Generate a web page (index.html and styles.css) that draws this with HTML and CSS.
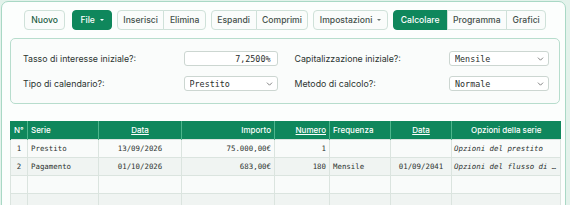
FILE: index.html
```html
<!DOCTYPE html>
<html lang="it">
<head>
<meta charset="utf-8">
<title>Calcolatore prestito</title>
<link rel="stylesheet" href="styles.css">
</head>
<body>
<div class="app">
  <div class="toolbar">
    <button class="btn btn-new">Nuovo</button>
    <button class="btn btn-primary">File <span class="caret"></span></button>
    <div class="group">
      <button class="btn">Inserisci</button>
      <button class="btn">Elimina</button>
    </div>
    <div class="group">
      <button class="btn">Espandi</button>
      <button class="btn">Comprimi</button>
    </div>
    <button class="btn">Impostazioni <span class="caret caret-dark"></span></button>
    <div class="group">
      <button class="btn btn-primary">Calcolare</button>
      <button class="btn">Programma</button>
      <button class="btn">Grafici</button>
    </div>
  </div>

  <div class="settings">
    <div class="field">
      <label class="label">Tasso di interesse iniziale?:</label>
      <input class="control control-sm num" type="text" value="7,2500%">
    </div>
    <div class="field">
      <label class="label">Capitalizzazione iniziale?:</label>
      <div class="select-wrap control-md">
        <select class="control select"><option>Mensile</option></select>
        <svg class="chev" viewBox="0 0 8 5" width="7" height="4"><path d="M0.8 0.8 L4 4 L7.2 0.8" fill="none" stroke="#666" stroke-width="1"/></svg>
      </div>
    </div>
    <div class="field">
      <label class="label">Tipo di calendario?:</label>
      <div class="select-wrap control-sm">
        <select class="control select"><option>Prestito</option></select>
        <svg class="chev" viewBox="0 0 8 5" width="7" height="4"><path d="M0.8 0.8 L4 4 L7.2 0.8" fill="none" stroke="#666" stroke-width="1"/></svg>
      </div>
    </div>
    <div class="field">
      <label class="label">Metodo di calcolo?:</label>
      <div class="select-wrap control-md">
        <select class="control select"><option>Normale</option></select>
        <svg class="chev" viewBox="0 0 8 5" width="7" height="4"><path d="M0.8 0.8 L4 4 L7.2 0.8" fill="none" stroke="#666" stroke-width="1"/></svg>
      </div>
    </div>
  </div>

  <table class="grid">
    <colgroup>
      <col class="c-n"><col class="c-serie"><col class="c-data"><col class="c-imp">
      <col class="c-num"><col class="c-freq"><col class="c-data2"><col class="c-opt">
    </colgroup>
    <thead>
      <tr>
        <th class="l">N°</th>
        <th class="l">Serie</th>
        <th class="c"><u>Data</u></th>
        <th class="r">Importo</th>
        <th class="r"><u>Numero</u></th>
        <th class="l">Frequenza</th>
        <th class="c"><u>Data</u></th>
        <th class="c">Opzioni della serie</th>
      </tr>
    </thead>
    <tbody>
      <tr>
        <td class="c">1</td><td>Prestito</td><td class="c">13/09/2026</td><td class="r">75.000,00€</td>
        <td class="r">1</td><td></td><td></td><td class="opt">Opzioni del prestito</td>
      </tr>
      <tr>
        <td class="c">2</td><td>Pagamento</td><td class="c">01/10/2026</td><td class="r">683,00€</td>
        <td class="r">180</td><td>Mensile</td><td class="c">01/09/2041</td><td class="opt">Opzioni del flusso di …</td>
      </tr>
      <tr><td></td><td></td><td></td><td></td><td></td><td></td><td></td><td></td></tr>
      <tr><td></td><td></td><td></td><td></td><td></td><td></td><td></td><td></td></tr>
      <tr><td></td><td></td><td></td><td></td><td></td><td></td><td></td><td></td></tr>
    </tbody>
  </table>
</div>
</body>
</html>
```

FILE: styles.css
```css
html, body {
  margin: 0;
  padding: 0;
}
body {
  background: #e3f2eb;
  font-family: Inter, "Noto Sans", sans-serif;
  overflow: hidden;
  height: 205px;
}
.app {
  margin: 1px 4px 0 1px;
  border: 1px solid #a9d8c5;
  border-radius: 7px;
  background: #fcfefd;
  padding: 8px 5px 10px 8px;
  height: 240px;
}

/* toolbar */
.toolbar {
  display: flex;
  justify-content: center;
  gap: 5px;
  height: 20px;
  margin-bottom: 8px;
}
.group {
  display: flex;
}
.btn {
  font-family: Inter, "Noto Sans", sans-serif;
  font-weight: 500;
  font-size: 8.6px;
  height: 20px;
  padding: 0 5.5px;
  border: 1px solid #cfe1d9;
  background: #fafcfb;
  color: #44504b;
  border-radius: 4px;
  display: flex;
  align-items: center;
  gap: 5px;
  cursor: pointer;
}
.btn-new {
  color: #1d5e44;
  padding: 0 6.5px;
  margin-right: 2px;
}
.btn-primary {
  background: #0f875c;
  border-color: #0f875c;
  color: #ffffff;
  padding: 0 7px;
}
.group .btn {
  border-radius: 0;
}
.group .btn + .btn {
  margin-left: -1px;
}
.group .btn:first-child {
  border-radius: 4px 0 0 4px;
}
.group .btn:last-child {
  border-radius: 0 4px 4px 0;
}
.caret {
  display: inline-block;
  width: 0;
  height: 0;
  border-left: 2px solid transparent;
  border-right: 2px solid transparent;
  border-top: 2px solid #ffffff;
}
.caret-dark {
  border-top-color: #6b7570;
}

/* settings */
.settings {
  border: 1px solid #b7ddcd;
  border-radius: 5px;
  background: #fafcfb;
  padding: 12px 10px 12px 12px;
  display: grid;
  grid-template-columns: 1fr 1fr;
  column-gap: 17px;
  row-gap: 10px;
  margin-bottom: 17px;
}
.field {
  display: flex;
  align-items: center;
  justify-content: space-between;
  height: 15px;
}
.label {
  font-size: 8.8px;
  color: #2c3531;
}
.control {
  display: block;
  box-sizing: border-box;
  height: 15px;
  border: 1px solid #ccd6d1;
  border-radius: 3px;
  background: #ffffff;
  font-family: "DejaVu Sans Mono", monospace;
  font-size: 8.4px;
  color: #2b2f2d;
  padding: 0 5px;
  margin: 0;
  outline: none;
}
.control-sm {
  width: 94px;
}
.control-md {
  width: 100px;
}
.num {
  text-align: right;
  padding-right: 6px;
}
.select-wrap {
  position: relative;
  height: 15px;
}
.select {
  width: 100%;
  appearance: none;
  -webkit-appearance: none;
}
.chev {
  position: absolute;
  right: 5px;
  top: 5.5px;
}

/* table */
.grid {
  width: 550px;
  border-collapse: collapse;
  table-layout: fixed;
}
.c-n { width: 17px; }
.c-serie { width: 71px; }
.c-data { width: 83px; }
.c-imp { width: 93px; }
.c-num { width: 55px; }
.c-freq { width: 61px; }
.c-data2 { width: 61px; }
.c-opt { width: 109px; }

.grid th {
  background: #0f875c;
  color: #ffffff;
  font-weight: 500;
  font-size: 8px;
  height: 18px;
  padding: 0 3px;
  border-left: 1px solid #4db58c;
  white-space: nowrap;
}
.grid th:first-child {
  border-left-color: #0f875c;
}
.grid td {
  font-family: "DejaVu Sans Mono", monospace;
  font-size: 7.4px;
  color: #2d3330;
  height: 17px;
  padding: 0 3px;
  border: 1px solid #dbe4df;
  white-space: nowrap;
  overflow: hidden;
}
.grid tbody tr:nth-child(odd) td {
  background: #f9fbfa;
}
.grid tbody tr:nth-child(even) td {
  background: #f0f4f2;
}
.grid .l { text-align: left; }
.grid .c { text-align: center; }
.grid .r { text-align: right; }
.grid .opt {
  font-style: italic;
  padding-left: 2px;
  padding-right: 1px;
  overflow: visible;
}
```
